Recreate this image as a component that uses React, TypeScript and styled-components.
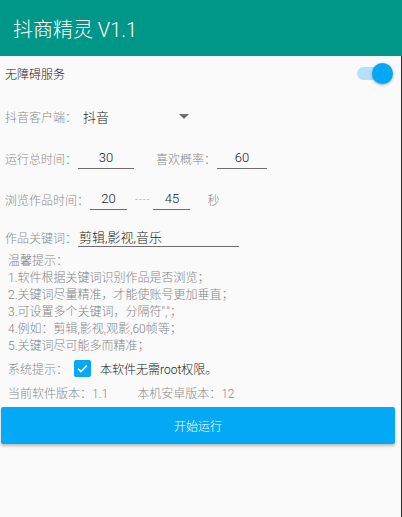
import styled, { createGlobalStyle } from "styled-components";

const GlobalStyle = createGlobalStyle`
  html, body {
    margin: 0;
    padding: 0;
    background: #fafafa;
  }
  body {
    font-family: Roboto, "Noto Sans CJK SC", sans-serif;
    font-weight: 300;
  }
`;

const Page = styled.div`
  min-height: 100vh;
  width: 402px;
  box-sizing: border-box;
  border-right: 1px solid #2a2a2a;
  background: #fafafa;
  display: flex;
  flex-direction: column;
`;

const AppBar = styled.header`
  height: 56px;
  background: #009688;
  display: flex;
  align-items: center;
  padding-left: 13px;
  color: #fff;
  font-size: 20px;
  font-weight: 300;
  margin-right: -1px;
`;

const Row = styled.div<{ $h: number; $pl?: number }>`
  height: ${(p) => p.$h}px;
  display: flex;
  align-items: center;
  padding-left: ${(p) => p.$pl ?? 5}px;
  font-size: 12px;
  white-space: nowrap;
`;

const DarkText = styled.span<{ $size?: number }>`
  color: #222;
  font-size: ${(p) => p.$size ?? 12}px;
`;

const Label = styled.span<{ $ml?: number }>`
  color: #8a8a8a;
  font-size: 12px;
  margin-left: ${(p) => p.$ml ?? 0}px;
`;

const SwitchTrack = styled.div`
  margin-left: auto;
  margin-right: 14px;
  position: relative;
  width: 30px;
  height: 13px;
  border-radius: 7px;
  background: #b3e1f8;
`;

const SwitchThumb = styled.div`
  position: absolute;
  right: -6px;
  top: -4px;
  width: 21px;
  height: 21px;
  border-radius: 50%;
  background: #03a9f4;
  box-shadow: 0 1px 3px rgba(0, 0, 0, 0.35);
`;

const Spinner = styled.div`
  width: 106px;
  margin-left: 6px;
  display: flex;
  align-items: center;
  justify-content: space-between;
`;

const Caret = styled.span`
  width: 0;
  height: 0;
  border-left: 5px solid transparent;
  border-right: 5px solid transparent;
  border-top: 5px solid #6e6e6e;
  margin-top: 1px;
`;

const Field = styled.div<{ $w: number; $left?: boolean }>`
  width: ${(p) => p.$w}px;
  height: 22px;
  border-bottom: 1px solid #6f6f6f;
  display: flex;
  align-items: center;
  justify-content: ${(p) => (p.$left ? "flex-start" : "center")};
  color: #222;
  font-size: 13px;
  box-sizing: border-box;
  padding-left: ${(p) => (p.$left ? 1 : 0)}px;
`;

const Dash = styled.span`
  color: #a0a0a0;
  font-size: 10px;
  letter-spacing: 1px;
  margin: 0 3px 0 8px;
`;

const Tips = styled.div`
  padding: 3px 0 0 8px;
  color: #858585;
  font-size: 12px;
  line-height: 17px;
`;

const Check = styled.div`
  width: 17px;
  height: 17px;
  border-radius: 2px;
  background: #03a9f4;
  margin: 0 9px 0 6px;
  display: flex;
  align-items: center;
  justify-content: center;
`;

const RunButton = styled.button`
  margin: 3px 6px 0 1px;
  height: 37px;
  border: none;
  border-radius: 2px;
  background: #03a9f4;
  color: #fff;
  font-family: Roboto, "Noto Sans CJK SC", sans-serif;
  font-weight: 300;
  font-size: 12px;
  box-shadow: 0 2px 3px rgba(0, 0, 0, 0.25);
`;

export default function App() {
  return (
    <Page>
      <GlobalStyle />
      <AppBar>抖商精灵 V1.1</AppBar>
      <Row $h={34}>
        <DarkText>无障碍服务</DarkText>
        <SwitchTrack>
          <SwitchThumb />
        </SwitchTrack>
      </Row>
      <Row $h={52}>
        <Label>抖音客户端：</Label>
        <Spinner>
          <DarkText $size={13}>抖音</DarkText>
          <Caret />
        </Spinner>
      </Row>
      <Row $h={32}>
        <Label>运行总时间：</Label>
        <Field $w={56} style={{ marginLeft: 1 }}>30</Field>
        <Label $ml={22}>喜欢概率：</Label>
        <Field $w={50} style={{ marginLeft: 1 }}>60</Field>
      </Row>
      <Row $h={50}>
        <Label>浏览作品时间：</Label>
        <Field $w={37} style={{ marginLeft: 1 }}>20</Field>
        <Dash>----</Dash>
        <Field $w={37}>45</Field>
        <Label $ml={17}>秒</Label>
      </Row>
      <Row $h={26}>
        <Label>作品关键词：</Label>
        <Field $w={161} $left style={{ marginLeft: 1, height: 20 }}>
          剪辑,影视,音乐
        </Field>
      </Row>
      <Tips>
        <div>温馨提示：</div>
        <div>1.软件根据关键词识别作品是否浏览；</div>
        <div>2.关键词尽量精准，才能使账号更加垂直；</div>
        <div>3.可设置多个关键词，分隔符","；</div>
        <div>4.例如：剪辑,影视,观影,60帧等；</div>
        <div>5.关键词尽可能多而精准；</div>
      </Tips>
      <Row $h={24} $pl={8} style={{ marginTop: 1 }}>
        <Label>系统提示：</Label>
        <Check>
          <svg width="13" height="13" viewBox="0 0 24 24">
            <path d="M4 12.5l5 5L20 6.5" fill="none" stroke="#fff" strokeWidth="3" />
          </svg>
        </Check>
        <DarkText>本软件无需root权限。</DarkText>
      </Row>
      <Row $h={24} $pl={8}>
        <Label>当前软件版本：1.1</Label>
        <Label $ml={29}>本机安卓版本：12</Label>
      </Row>
      <RunButton>开始运行</RunButton>
    </Page>
  );
}
